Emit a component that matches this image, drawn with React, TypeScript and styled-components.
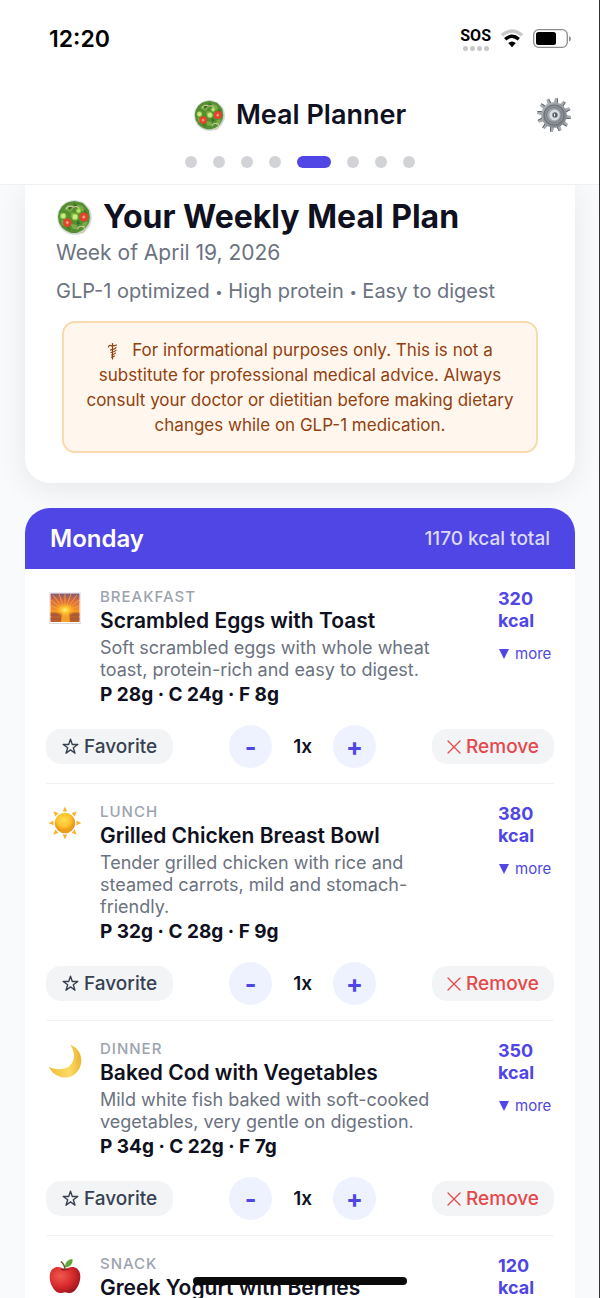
import * as React from 'react'
import styled, { createGlobalStyle } from 'styled-components'

type Meal = {
  kind: string
  icon: React.ReactNode
  name: string
  description: string
  macros: string
  kcal: number
}

const SaladIcon = ({ size }: { size: number }) => (
  <svg width={size} height={size} viewBox="0 0 36 36" aria-hidden="true">
    <circle cx="18" cy="18" r="17" fill="#dfe3e6" />
    <circle cx="18" cy="18" r="16.2" fill="#cdd3d0" />
    <path
      d="M18 2l4 1 4 1 3 3 3 4 1 7-1 5-3 5-4 3-5 2h-5l-5-2-4-3-3-5-1-6 1-5 3-5 4-3 3-1z"
      fill="#558f30"
    />
    <path
      d="M8 10l4-4 5 3-3 4zM20 5l6 2 2 5-6-1zM5 20l4 2 1 5-4-2zM14 24l6 1 2 5-6-1zM26 23l5-1-2 5-4 2zM15 13l5 1-2 5-4-2z"
      fill="#79ad45"
    />
    <path
      d="M11 7l5 1-3 3zM27 10l4 4-3 1zM9 26l4 2 1 3zM21 20l3 4-4 1zM17 4l4 2-3 2z"
      fill="#3c6f28"
    />
    <g fill="none" stroke="#cfc9a0" strokeWidth="1.100">
      <path d="M10 10a4 3 0 0 1 7-2M17 8a4 4 0 0 1 6 2M21 29a4 3 0 0 1 6-2 3 3 0 0 1-4 5" />
    </g>
    <circle cx="7" cy="16.500" r="2.600" fill="#cdea92" stroke="#8fca3e" />
    <circle cx="18.500" cy="17.500" r="2.800" fill="#cdea92" stroke="#8fca3e" />
    <circle cx="22" cy="11.500" r="2" fill="#bfe080" stroke="#8fca3e" />
    <circle cx="11" cy="23" r="4.200" fill="#e0452b" />
    <circle cx="27" cy="17.500" r="4.400" fill="#e0452b" />
    <path
      d="M9.500 23h3M11 21.500v3M25.500 17.500h3M27 16v3"
      stroke="#f7a184"
      strokeWidth="1.300"
    />
  </svg>
)

const GearIcon = () => {
  const teeth = Array.from({ length: 12 }, (_, i) => i * 30 + 8)
  return (
    <svg width="36" height="36" viewBox="0 0 36 36" aria-hidden="true">
      <defs>
        <linearGradient id="gear-face" x1="0" y1="0" x2="1" y2="1">
          <stop offset="0" stopColor="#b4b8bc" />
          <stop offset="1" stopColor="#777c82" />
        </linearGradient>
      </defs>
      {teeth.map(angle => (
        <g key={angle} transform={`rotate(${angle} 18 18)`}>
          <path d="M16 7l.6-6h2.800l.6 6z" fill="#a6abb0" />
          <path d="M18.800 1h.8l.6 6h-.9z" fill="#54585d" />
        </g>
      ))}
      <circle cx="18" cy="18" r="12.800" fill="url(#gear-face)" />
      <circle cx="18" cy="18" r="10" fill="#8d9399" stroke="#6a6f75" strokeWidth="1.200" />
      <circle cx="18" cy="18" r="7.400" fill="#a3a8ae" stroke="#737980" />
      <circle cx="18.500" cy="18" r="5.200" fill="#dcdfe2" />
      <circle cx="19" cy="18" r="2.700" fill="#5a6068" />
      <path d="M19 16.200a2 2 0 0 0 0 3.600z" fill="#f4f5f6" />
    </svg>
  )
}

const SunriseIcon = () => (
  <svg width="34" height="34" viewBox="0 0 34 34" aria-hidden="true">
    <defs>
      <linearGradient id="dawn" x1="0" y1="0" x2="0" y2="1">
        <stop offset="0" stopColor="#7c5a76" />
        <stop offset="0.350" stopColor="#d96a3e" />
        <stop offset="1" stopColor="#fba01f" />
      </linearGradient>
      <radialGradient id="dawn-glow">
        <stop offset="0" stopColor="#fff27a" />
        <stop offset="0.400" stopColor="#ffc62e" />
        <stop offset="1" stopColor="#ffae20" stopOpacity="0" />
      </radialGradient>
    </defs>
    <rect x="1" y="1" width="32" height="32" fill="#d9d9dc" />
    <rect x="1.500" y="1.500" width="31" height="30.500" fill="#fff" />
    <rect x="2.500" y="2.500" width="29" height="20" fill="url(#dawn)" />
    <path
      d="M17 20L17 3M17 20L11 3M17 20L23 3M17 20L5 4M17 20L29 4M17 20L3 9M17 20L31 9M17 20L3 15M17 20L31 15"
      stroke="#f5a03f"
      strokeWidth="0.900"
    />
    <rect x="2.500" y="21.500" width="29" height="9.500" fill="#b9602f" />
    <path d="M2.500 24h29M2.500 28h29" stroke="#a05339" />
    <path d="M14 21h7l1 10h-9z" fill="#f2a02c" />
    <ellipse cx="17" cy="19" rx="10" ry="7" fill="url(#dawn-glow)" />
  </svg>
)

const SunIcon = () => (
  <svg width="34" height="34" viewBox="0 0 34 34" aria-hidden="true">
    <defs>
      <radialGradient id="sun-face" cx="0.450" cy="0.350">
        <stop offset="0" stopColor="#ffe04f" />
        <stop offset="0.700" stopColor="#fdc02c" />
        <stop offset="1" stopColor="#ee9a1d" />
      </radialGradient>
    </defs>
    {[0, 45, 90, 135, 180, 225, 270, 315].map(angle => (
      <path
        key={angle}
        d="M14.800 5.500L17 .5l2.200 5z"
        fill="#f6b22b"
        transform={`rotate(${angle} 17 17)`}
      />
    ))}
    <circle cx="17" cy="17" r="10.300" fill="url(#sun-face)" />
  </svg>
)

const MoonIcon = () => (
  <svg width="34" height="36" viewBox="0 0 34 36" aria-hidden="true">
    <defs>
      <linearGradient id="moon-face" x1="0" y1="0.600" x2="1" y2="0.500">
        <stop offset="0" stopColor="#f1bd35" />
        <stop offset="0.600" stopColor="#fbdc68" />
        <stop offset="1" stopColor="#edb32f" />
      </linearGradient>
    </defs>
    <path
      d="M22 1.500C30 4.500 34.500 12 33 20.500 31.500 29 24.500 35 16.500 34.500 9.500 34 3.500 30 .8 23.500c5 3.500 14.500 3.700 19.700.2C27.500 19 27.500 9.500 22 1.500z"
      fill="url(#moon-face)"
    />
  </svg>
)

const AppleIcon = () => (
  <svg width="34" height="36" viewBox="0 0 34 36" aria-hidden="true">
    <defs>
      <radialGradient id="apple-skin" cx="0.350" cy="0.350" r="0.700">
        <stop offset="0" stopColor="#ef5a50" />
        <stop offset="0.600" stopColor="#d62a2b" />
        <stop offset="1" stopColor="#9f1620" />
      </radialGradient>
    </defs>
    <path
      d="M17 11.500c4-3 9-3.500 12.500-.5 4 3.800 3.300 11.500.5 17-2.500 5-5.500 7.300-8.500 7-2 0-2.800-.8-4.500-.8s-2.500.8-4.500.8c-3.200.2-6.500-2.500-8.700-7.200C1 22 .800 14.500 4.500 11c3.500-3.200 8.500-2.500 12.500.5z"
      fill="url(#apple-skin)"
    />
    <path d="M12 11.300q5 2.500 10-.2-5-1.200-10 .2z" fill="#8f1820" />
    <path d="M17 12q0-5-4-8.500" fill="none" stroke="#6b4a2b" strokeWidth="1.500" />
    <path d="M17 9.500C17 4 20 1.500 24.500 1c.5 4.500-2 8-7.500 8.500z" fill="#5fa53a" />
  </svg>
)

const WifiIcon = () => (
  <svg width="24" height="19" viewBox="0 0 24 19" aria-hidden="true">
    <path d="M1.800 6.300Q12-2.300 22.200 6.300" fill="none" stroke="#c8c8c8" strokeWidth="3.400" />
    <path d="M5.200 10.300Q12 4.300 18.800 10.300" fill="none" stroke="#000" strokeWidth="3.400" />
    <path d="M12 18.200L8.200 14Q12 11 15.800 14z" fill="#000" />
  </svg>
)

const BatteryIcon = () => (
  <svg width="38" height="19" viewBox="0 0 38 19" aria-hidden="true">
    <rect x="0.700" y="0.700" width="33.600" height="17.600" rx="5" fill="none" stroke="#8c8c8c" strokeWidth="1.300" />
    <rect x="3" y="3" width="20" height="13" rx="2.500" fill="#000" />
    <path d="M36 7v5.500q2-.8 2-2.700T36 7z" fill="#8c8c8c" />
  </svg>
)

const StaffIcon = () => (
  <svg width="12" height="18" viewBox="0 0 12 18" aria-hidden="true">
    <g fill="none" stroke="currentColor" strokeWidth="1.200" strokeLinecap="round">
      <path d="M5.500 1.500v15.500" />
      <path d="M1.500 5q0-2 2.500-1.400 2.500.6 5.500-.6M9 5.500Q8 7.200 3.500 7.800M9 8.200q-1 1.600-5 2.300M8.500 11q-1 1.400-4 2M7.500 14l-3 1.300" />
    </g>
  </svg>
)

const StarIcon = () => (
  <svg width="17" height="17" viewBox="0 0 17 17" aria-hidden="true">
    <path
      d="M8.500 1.200l1.800 5.300h5.500l-4.500 3.300 1.700 5.400-4.500-3.300-4.500 3.300 1.700-5.400L1.200 6.500h5.500z"
      fill="none"
      stroke="currentColor"
      strokeWidth="1.400"
      strokeLinejoin="round"
    />
  </svg>
)

const CrossIcon = () => (
  <svg width="14" height="14" viewBox="0 0 14 14" aria-hidden="true">
    <path d="M1 1l12 12M13 1L1 13" stroke="currentColor" strokeWidth="1.300" strokeLinecap="round" />
  </svg>
)

const TriangleIcon = () => (
  <svg width="12" height="12" viewBox="0 0 12 12" aria-hidden="true">
    <path d="M1 1h10L6 11z" fill="currentColor" />
  </svg>
)

const meals: Meal[] = [
  {
    kind: 'Breakfast',
    icon: <SunriseIcon />,
    name: 'Scrambled Eggs with Toast',
    description: 'Soft scrambled eggs with whole wheat toast, protein-rich and easy to digest.',
    macros: 'P 28g · C 24g · F 8g',
    kcal: 320
  },
  {
    kind: 'Lunch',
    icon: <SunIcon />,
    name: 'Grilled Chicken Breast Bowl',
    description: 'Tender grilled chicken with rice and steamed carrots, mild and stomach-friendly.',
    macros: 'P 32g · C 28g · F 9g',
    kcal: 380
  },
  {
    kind: 'Dinner',
    icon: <MoonIcon />,
    name: 'Baked Cod with Vegetables',
    description: 'Mild white fish baked with soft-cooked vegetables, very gentle on digestion.',
    macros: 'P 34g · C 22g · F 7g',
    kcal: 350
  },
  {
    kind: 'Snack',
    icon: <AppleIcon />,
    name: 'Greek Yogurt with Berries',
    description: '',
    macros: '',
    kcal: 120
  }
]

const steps = ['Profile', 'Goals', 'Diet', 'Meals', 'Plan', 'Groceries', 'Recipes', 'Progress']

const MealItem = ({ meal }: { meal: Meal }) => {
  const [servings, setServings] = React.useState(1)

  return (
    <MealRow>
      <MealMain>
        <MealIcon>{meal.icon}</MealIcon>
        <MealBody>
          <MealKind>{meal.kind}</MealKind>
          <MealName>{meal.name}</MealName>
          {meal.description && <MealText>{meal.description}</MealText>}
          {meal.macros && <Macros>{meal.macros}</Macros>}
        </MealBody>
        <MealSide>
          <Kcal>{meal.kcal} kcal</Kcal>
          {meal.description && (
            <MoreButton type="button">
              <TriangleIcon />
              more
            </MoreButton>
          )}
        </MealSide>
      </MealMain>
      {meal.macros && (
        <Actions>
          <PillButton type="button">
            <StarIcon />
            Favorite
          </PillButton>
          <Stepper>
            <RoundButton
              type="button"
              aria-label="Fewer servings"
              onClick={() => setServings(Math.max(1, servings - 1))}
            >
              -
            </RoundButton>
            <Servings>{servings}x</Servings>
            <RoundButton
              type="button"
              aria-label="More servings"
              onClick={() => setServings(servings + 1)}
            >
              +
            </RoundButton>
          </Stepper>
          <PillButton type="button" $danger>
            <CrossIcon />
            Remove
          </PillButton>
        </Actions>
      )}
    </MealRow>
  )
}

export default function App() {
  return (
    <Screen>
      <GlobalStyle />
      <Header>
        <StatusBar>
          <Time>12:20</Time>
          <StatusIcons>
            <Signal>
              <Sos>SOS</Sos>
              <SignalDots>
                <i />
                <i />
                <i />
                <i />
              </SignalDots>
            </Signal>
            <WifiIcon />
            <BatteryIcon />
          </StatusIcons>
        </StatusBar>
        <TitleBar>
          <AppTitle>
            <SaladIcon size={33} />
            Meal Planner
          </AppTitle>
          <SettingsButton type="button" aria-label="Settings">
            <GearIcon />
          </SettingsButton>
        </TitleBar>
        <Steps>
          {steps.map(step => (
            <StepDot key={step} type="button" aria-label={step} $active={step === 'Plan'} />
          ))}
        </Steps>
      </Header>

      <Content>
        <PlanCard>
          <PlanTitle>
            <SaladIcon size={37} />
            Your Weekly Meal Plan
          </PlanTitle>
          <PlanDate>Week of April 19, 2026</PlanDate>
          <PlanTags>
            GLP-1 optimized <Bullet>•</Bullet> High protein <Bullet>•</Bullet> Easy to digest
          </PlanTags>
          <Disclaimer>
            <Staff>
              <StaffIcon />
            </Staff>
            For informational purposes only. This is not a substitute for professional medical
            advice. Always consult your doctor or dietitian before making dietary changes while on
            GLP-1 medication.
          </Disclaimer>
        </PlanCard>

        <DayCard>
          <DayHeader>
            <DayName>Monday</DayName>
            <DayTotal>1170 kcal total</DayTotal>
          </DayHeader>
          <MealList>
            {meals.map(meal => (
              <MealItem key={meal.kind} meal={meal} />
            ))}
          </MealList>
        </DayCard>
      </Content>
      <HomeIndicator />
    </Screen>
  )
}

const GlobalStyle = createGlobalStyle`
  * {
    box-sizing: border-box;
  }
  body {
    margin: 0;
    font-family: Inter, "Liberation Sans", sans-serif;
    color: #0f1020;
  }
  button {
    font-family: inherit;
    border: 0;
    padding: 0;
    background: none;
    cursor: pointer;
  }
  svg {
    display: block;
    flex-shrink: 0;
  }
`

const Screen = styled.div`
  display: flex;
  flex-direction: column;
  height: 100vh;
  overflow: hidden;
  background: #f9fafb;
  border-right: 1px solid #333;
`

const Header = styled.header`
  flex-shrink: 0;
  position: relative;
  z-index: 1;
  background: #fff;
  border-bottom: 1px solid #f0f1f3;
  padding-bottom: 16px;
`

const StatusBar = styled.div`
  display: flex;
  align-items: center;
  justify-content: space-between;
  height: 77px;
  padding: 0 28px 0 49px;
`

const Time = styled.span`
  font-size: 23px;
  font-weight: 600;
  color: #000;
`

const StatusIcons = styled.div`
  display: flex;
  align-items: center;
  gap: 9px;
`

const Signal = styled.div`
  display: flex;
  flex-direction: column;
  align-items: center;
  gap: 1px;
`

const Sos = styled.span`
  font-family: 'Liberation Sans Narrow', Roboto, sans-serif;
  font-size: 16px;
  line-height: 18px;
  font-weight: 700;
  color: #000;
`

const SignalDots = styled.div`
  display: flex;
  gap: 2px;

  i {
    width: 5px;
    height: 5px;
    border-radius: 50%;
    background: #c8c8c8;
  }
`

const TitleBar = styled.div`
  display: grid;
  grid-template-columns: 1fr auto 1fr;
  align-items: center;
  padding: 20px 27px 23px;
`

const AppTitle = styled.h1`
  grid-column: 2;
  display: flex;
  align-items: center;
  gap: 10px;
  margin: 0;
  font-size: 27px;
  line-height: 36px;
  font-weight: 600;
`

const SettingsButton = styled.button`
  justify-self: end;
`

const Steps = styled.nav`
  display: flex;
  justify-content: center;
  gap: 16px;
`

const StepDot = styled.button<{ $active: boolean }>`
  width: ${props => (props.$active ? '34px' : '12px')};
  height: 12px;
  border-radius: 6px;
  background: ${props => (props.$active ? '#4f46e5' : '#d1d3d6')};
`

const Content = styled.main`
  flex: 1;
  min-height: 0;
  overflow: hidden;
  padding: 0 24px 0 25px;
`

const PlanCard = styled.section`
  padding: 12px 31px 30px;
  margin-bottom: 25px;
  background: #fff;
  border-radius: 0 0 25px 25px;
  box-shadow: 0 6px 30px rgba(15, 23, 42, 0.08);
`

const PlanTitle = styled.h2`
  display: flex;
  align-items: center;
  gap: 10px;
  margin: 0;
  font-size: 32px;
  line-height: 40px;
  font-weight: 700;
`

const PlanDate = styled.p`
  margin: 0;
  font-size: 21px;
  line-height: 32px;
  color: #6b7280;
`

const PlanTags = styled.p`
  margin: 8px 0 16px;
  font-size: 20px;
  line-height: 28px;
  color: #6b7280;
`

const Bullet = styled.span`
  font-size: 13px;
  line-height: 1;
  vertical-align: middle;
`

const Disclaimer = styled.p`
  margin: 0 6px;
  padding: 15px 20px 13px;
  border: 2px solid #fbd9ae;
  border-radius: 13px;
  background: #fff7ed;
  font-size: 17px;
  line-height: 25px;
  text-align: center;
  color: #92400e;
`

const Staff = styled.span`
  display: inline-block;
  vertical-align: middle;
  margin-right: 13px;
`

const DayCard = styled.section`
  background: #fff;
  border-radius: 25px;
  overflow: hidden;
  box-shadow: 0 2px 8px rgba(15, 23, 42, 0.02);
`

const DayHeader = styled.div`
  display: flex;
  align-items: center;
  justify-content: space-between;
  height: 61px;
  padding: 0 25px;
  background: #4f46e5;
  color: #fff;
`

const DayName = styled.h3`
  margin: 0;
  font-size: 24px;
  font-weight: 600;
`

const DayTotal = styled.span`
  font-size: 19px;
  font-weight: 500;
  color: #dcdafa;
`

const MealList = styled.ul`
  list-style: none;
  margin: 0;
  padding: 0 21px;
`

const MealRow = styled.li`
  padding: 17px 0 15px;
  border-bottom: 1px solid #f1f2f4;
`

const MealMain = styled.div`
  display: grid;
  grid-template-columns: 38px 1fr 56px;
  column-gap: 16px;
`

const MealIcon = styled.div`
  display: flex;
  justify-content: center;
  padding-top: 5px;
`

const MealBody = styled.div`
  padding-right: 16px;
`

const MealKind = styled.div`
  font-size: 15px;
  line-height: 22px;
  font-weight: 500;
  letter-spacing: 1px;
  text-transform: uppercase;
  color: #9ca3af;
`

const MealName = styled.h4`
  margin: 0 0 3px;
  font-size: 21px;
  line-height: 26px;
  font-weight: 600;
`

const MealText = styled.p`
  margin: 0;
  font-size: 18px;
  line-height: 22px;
  color: #6b7280;
`

const Macros = styled.div`
  font-size: 19px;
  line-height: 28px;
  font-weight: 700;
`

const MealSide = styled.div`
  padding-top: 2px;
  color: #4f46e5;
`

const Kcal = styled.div`
  width: 44px;
  font-size: 18px;
  line-height: 22px;
  font-weight: 700;
`

const MoreButton = styled.button`
  display: flex;
  align-items: center;
  gap: 5px;
  margin-top: 12px;
  font-size: 15px;
  line-height: 20px;
  color: #4f46e5;
`

const Actions = styled.div`
  display: flex;
  align-items: center;
  justify-content: space-between;
  margin-top: 16px;
`

const PillButton = styled.button<{ $danger?: boolean }>`
  display: flex;
  align-items: center;
  gap: 5px;
  height: 35px;
  padding: 0 ${props => (props.$danger ? '15px' : '16px')};
  border-radius: 15px;
  background: #f3f4f6;
  font-size: 19px;
  font-weight: 500;
  color: ${props => (props.$danger ? '#e5484a' : '#374151')};
`

const Stepper = styled.div`
  display: flex;
  align-items: center;
`

const RoundButton = styled.button`
  width: 43px;
  height: 43px;
  border-radius: 50%;
  background: #eef2ff;
  font-size: 25px;
  font-weight: 700;
  color: #4f46e5;
`

const Servings = styled.span`
  width: 61px;
  text-align: center;
  font-size: 19px;
  font-weight: 600;
`

const HomeIndicator = styled.div`
  position: fixed;
  bottom: 13px;
  left: 50%;
  z-index: 2;
  width: 214px;
  height: 8px;
  margin-left: -107px;
  border-radius: 4px;
  background: #0a0a0a;
`
